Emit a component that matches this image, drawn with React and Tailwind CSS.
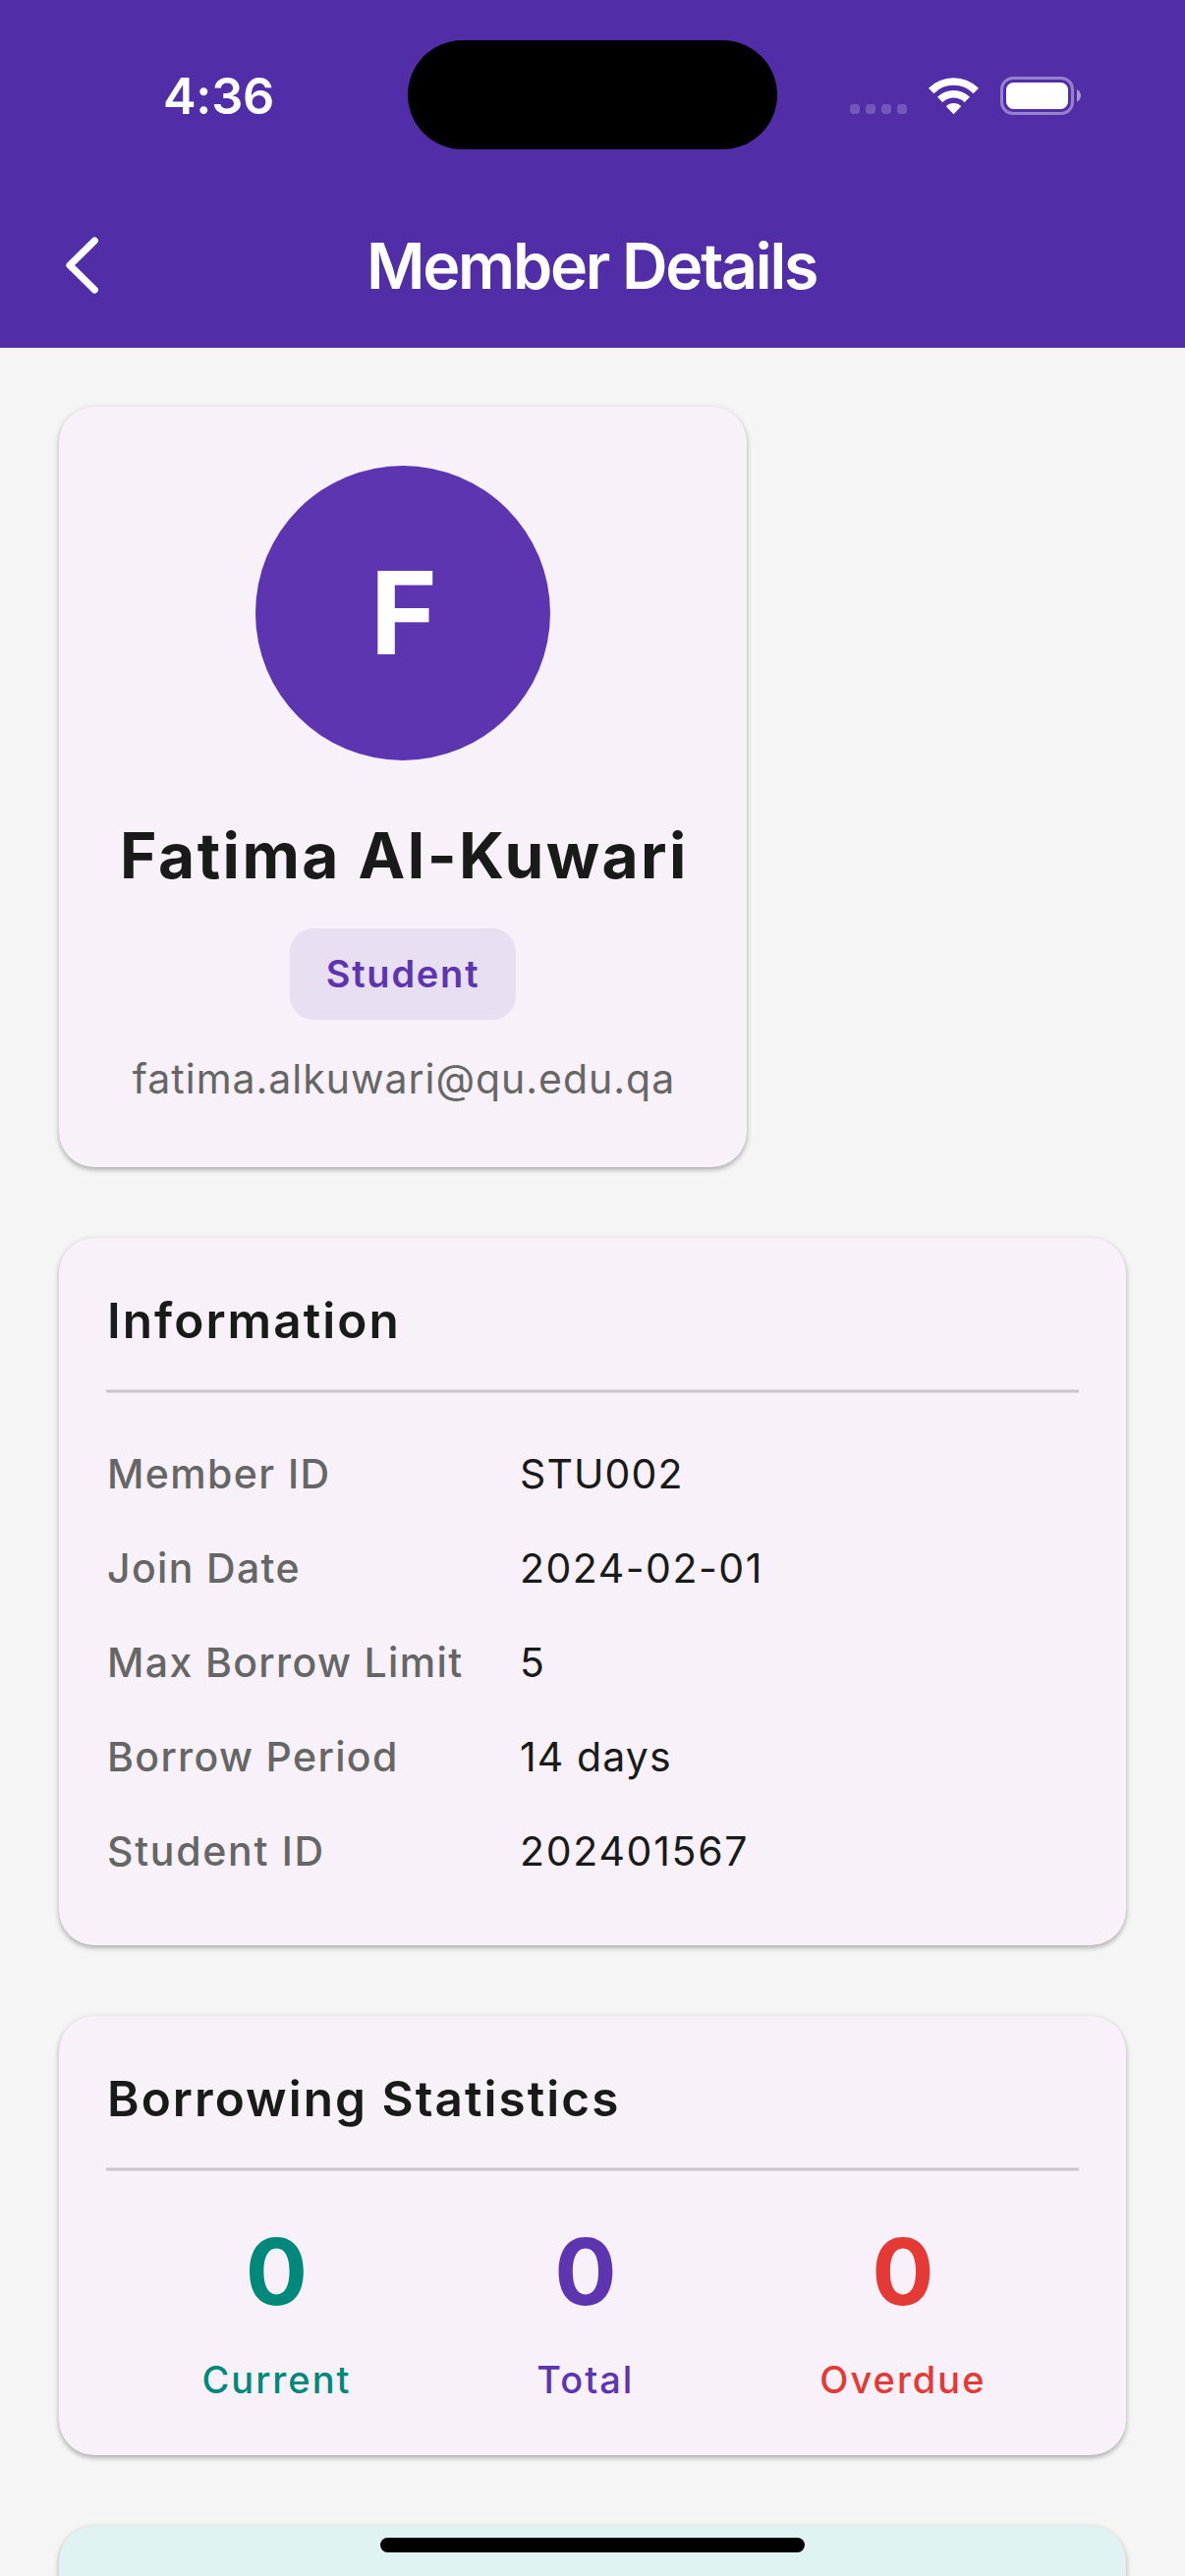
const INFO = [
  { label: 'Member ID', value: 'STU002', labelTracking: 'tracking-[1.4px]', valueTracking: 'tracking-[1.1px]' },
  { label: 'Join Date', value: '2024-02-01', labelTracking: 'tracking-[1.35px]', valueTracking: 'tracking-[1.5px]' },
  { label: 'Max Borrow Limit', value: '5', labelTracking: 'tracking-[1.36px]', valueTracking: 'tracking-[1.2px]' },
  { label: 'Borrow Period', value: '14 days', labelTracking: 'tracking-[1.35px]', valueTracking: 'tracking-[1.12px]' },
  { label: 'Student ID', value: '202401567', labelTracking: 'tracking-[1.7px]', valueTracking: 'tracking-[1.72px]' },
];

const STATS = [
  { label: 'Current', value: 0, color: 'text-[#00897b]' },
  { label: 'Total', value: 0, color: 'text-[#5e35b1]' },
  { label: 'Overdue', value: 0, color: 'text-[#e53935]' },
];

function StatusIcons() {
  return (
    <svg width="236" height="39" viewBox="865 78 236 39" fill="none" aria-hidden="true">
      <g fill="#ffffff" fillOpacity="0.2">
        <rect x="865" y="106" width="10" height="10" rx="3.4" />
        <rect x="881" y="106" width="10" height="10" rx="3.4" />
        <rect x="897" y="106" width="10" height="10" rx="3.4" />
        <rect x="913" y="106" width="10" height="10" rx="3.4" />
      </g>
      <path d="M947.7 92.5A32.2 32.2 0 0 1 993.3 92.5" stroke="#fff" strokeWidth="7.6" />
      <path d="M956.7 101.5A19.5 19.5 0 0 1 984.3 101.5" stroke="#fff" strokeWidth="7.6" />
      <path d="M970.5 116.2L962.8 108.2A11 11 0 0 1 978.2 108.2Z" fill="#fff" />
      <rect x="1019.5" y="79.5" width="72" height="36" rx="11.5" stroke="#fff" strokeOpacity="0.4" strokeWidth="3" />
      <rect x="1024" y="84" width="63" height="27" rx="7.5" fill="#fff" />
      <path d="M1096 91C1101.3 93.4 1101.3 101.2 1096 103.6Z" fill="#fff" fillOpacity="0.5" />
    </svg>
  );
}

function Card({ className = '', children }) {
  return (
    <section
      className={`rounded-[36px] shadow-[0_3px_5px_rgba(0,0,0,0.22),0_1px_7px_rgba(0,0,0,0.11)] ${className}`}
    >
      {children}
    </section>
  );
}

function CardTitle({ children }) {
  return (
    <>
      <h2 className="pl-px text-[49.5px] leading-[72px] font-semibold tracking-[2.05px] text-[#1a1a1a]">{children}</h2>
      <div className="mt-[34px] h-1 border-y border-[#e1dae4] bg-[#cbc4cf]" />
    </>
  );
}

export default function App() {
  return (
    <div className="relative h-[2622px] w-[1206px] overflow-hidden bg-[#f5f5f5] font-['Inter',sans-serif]">
      <header className="h-[354px] bg-[#512da8] text-white">
        <div className="flex h-[186px] items-center pt-2 pl-[166px]">
          <span className="w-[249px] shrink-0 pt-0.5 text-[50.5px] leading-[60px] font-semibold tracking-[-0.29px]">
            4:36
          </span>
          <div className="mb-px h-[111px] w-[376px] shrink-0 rounded-full bg-black" />
          <div className="ml-[74px] pt-px">
            <StatusIcons />
          </div>
        </div>
        <div className="flex h-[168px] items-center pl-[66px]">
          <svg width="36" height="60" viewBox="66 240 36 60" fill="none" aria-hidden="true">
            <path d="M96.3 245L71 270L96.3 295" stroke="#fff" strokeWidth="7.2" strokeLinecap="round" strokeLinejoin="round" />
          </svg>
          <h1 className="ml-[271px] pt-px text-[64.5px] leading-[80px] font-semibold tracking-[-2.27px] whitespace-nowrap">
            Member Details
          </h1>
        </div>
      </header>

      <main className="flex flex-col gap-[72px] px-[60px] pt-[60px]">
        <Card className="flex h-[774px] w-[700px] flex-col items-center bg-[#f8f1fa] pt-[60px]">
          <div className="flex size-[300px] items-center justify-center rounded-full bg-[#5e35b1] pl-0.5 text-[116.5px] leading-none font-bold text-white">
            F
          </div>
          <div className="mt-[49px] pl-[3px] text-[64px] leading-[96px] font-bold tracking-[2.48px] whitespace-nowrap text-[#1a1a1a]">
            Fatima Al-Kuwari
          </div>
          <div className="mt-[26px] flex h-[93px] w-[230px] items-center justify-center rounded-3xl bg-[#e8dff3] pb-px text-[38px] leading-none font-semibold tracking-[1.78px] text-[#5e35b1]">
            Student
          </div>
          <div className="mt-6 pl-0.5 text-[41px] leading-[72px] tracking-[0.98px] text-[#666666]">
            fatima.alkuwari@qu.edu.qa
          </div>
        </Card>

        <Card className="bg-[#f8f1fa] p-12">
          <CardTitle>Information</CardTitle>
          <dl className="mt-[34px]">
            {INFO.map((row) => (
              <div key={row.label} className="flex pl-px text-[41px] leading-[96px]">
                <dt className={`w-[420px] font-medium text-[#666666] ${row.labelTracking}`}>{row.label}</dt>
                <dd className={`text-[#1a1a1a] ${row.valueTracking}`}>{row.value}</dd>
              </div>
            ))}
          </dl>
        </Card>

        <Card className="bg-[#f8f1fa] px-12 pt-12 pb-[53px]">
          <CardTitle>Borrowing Statistics</CardTitle>
          <div className="mt-11 flex justify-around pl-[3px]">
            {STATS.map((stat) => (
              <div key={stat.label} className={`flex flex-col items-center ${stat.color}`}>
                <span className="text-[94px] leading-[116px] font-bold">{stat.value}</span>
                <span className="mt-7 text-[38px] leading-[48px] font-medium tracking-[2px]">{stat.label}</span>
              </div>
            ))}
          </div>
        </Card>

        <Card className="h-[300px] shrink-0 bg-[#e0f2f1]" />
      </main>

      <div className="absolute bottom-6 left-[387px] h-[15px] w-[432px] rounded-full bg-black" />
    </div>
  );
}
